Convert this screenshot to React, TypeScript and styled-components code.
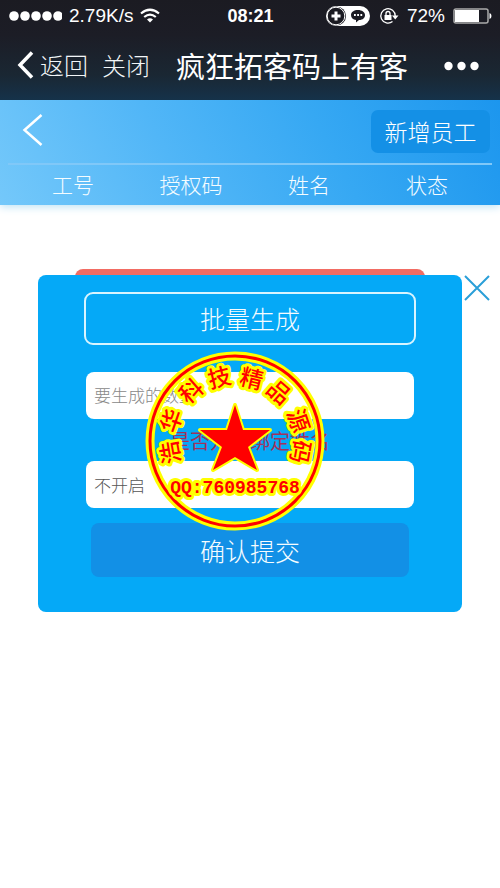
import React from "react";
import styled, { createGlobalStyle } from "styled-components";

const GlobalStyle = createGlobalStyle`
  *, *::before, *::after { box-sizing: border-box; }
  body { margin: 0; background: #fff; }
  body, button, input, select {
    font-family: "Noto Sans CJK SC", "Liberation Sans", sans-serif;
    font-weight: 300;
  }
  button { border: 0; padding: 0; background: none; color: inherit; cursor: pointer; }
`;

const Page = styled.div`
  min-height: 100vh;
  background: #fff;
`;

const TopBar = styled.div`
  position: relative;
  z-index: 1;
  height: 100px;
  color: #fff;
  background: linear-gradient(#1b1b22 0%, #1c1d26 35%, #1a2733 75%, #15324a 100%);
`;

const StatusBar = styled.div`
  display: grid;
  grid-template-columns: 1fr auto 1fr;
  align-items: center;
  height: 32px;
  padding: 0 8px 0 9px;
  font: 400 19px/32px "Liberation Sans", sans-serif;
`;

const StatusGroup = styled.div<{ $end?: boolean }>`
  display: flex;
  align-items: center;
  justify-content: ${(p) => (p.$end ? "flex-end" : "flex-start")};
  gap: ${(p) => (p.$end ? "8px" : "7px")};
`;

const Clock = styled.time`
  font-weight: 700;
  font-size: 18px;
`;

const NavBar = styled.nav`
  display: flex;
  align-items: center;
  height: 68px;
  padding: 0 21px 2px 17px;
`;

const NavButton = styled.button`
  display: flex;
  align-items: center;
  gap: 6px;
  margin-right: 14px;
  font-size: 24px;
  line-height: 36px;
  color: #f2f6f8;
`;

const NavTitle = styled.h1`
  flex: 1;
  margin: 0 0 0 12px;
  font-size: 29px;
  line-height: 40px;
  font-weight: 400;
  white-space: nowrap;
`;

const Header = styled.header`
  padding: 10px 8px 0;
  color: #fff;
  background: linear-gradient(62deg, #74c8fa 0%, #51b6f7 35%, #36a8f3 65%, #1c96ee 100%);
  box-shadow: 0 2px 8px #bfe3f5;
`;

const HeaderActions = styled.div`
  display: flex;
  align-items: center;
  justify-content: space-between;
  height: 53px;
  padding: 0 2px 10px 14px;
`;

const AddButton = styled.button`
  width: 119px;
  height: 43px;
  padding-bottom: 2px;
  border-radius: 7px;
  background: #1490e6;
  font-size: 23px;
  line-height: 40px;
`;

const ColumnBar = styled.div`
  padding: 0 6px;
  border-top: 2px solid #80c8f8;
`;

const Columns = styled.table`
  width: 100%;
  border-collapse: collapse;
  table-layout: fixed;

  th {
    height: 40px;
    padding: 0 0 2px;
    font-size: 21px;
    line-height: 38px;
    font-weight: 300;
    color: #f5fcff;
  }
`;

const Main = styled.main`
  position: relative;
  padding: 64px 15% 0;
`;

const BatchButton = styled.button`
  display: block;
  width: 100%;
  height: 53px;
  border-radius: 8px;
  background: #f26c63;
  color: #fff;
  font-size: 24px;
`;

const Dialog = styled.section`
  position: absolute;
  top: 70px;
  left: 38px;
  right: 38px;
  padding: 17px 46px 35px;
  border-radius: 8px;
  background: #05a9f7;
`;

const DialogTitle = styled.h2`
  height: 53px;
  margin: 0 0 27px;
  border: 2px solid #d8f4ff;
  border-radius: 9px;
  color: #f5fcff;
  font-size: 25px;
  line-height: 48px;
  font-weight: 300;
  text-align: center;
`;

const Form = styled.form`
  display: flex;
  flex-direction: column;
  padding: 0 2px;
`;

const CountInput = styled.input`
  width: 100%;
  height: 47px;
  padding: 0 8px 2px;
  border: 0;
  border-radius: 8px;
  background: #fff;
  font-size: 17px;
  color: #666;

  &::placeholder { color: #888; opacity: 1; }
`;

const BindSelect = styled.select`
  appearance: none;
  width: 100%;
  height: 47px;
  padding: 0 8px;
  border: 0;
  border-radius: 8px;
  background: #fff;
  font-size: 17px;
  color: #555;
`;

const BindLabel = styled.label`
  height: 42px;
  color: #a0325c;
  font-size: 20px;
  line-height: 44px;
  font-weight: 400;
  text-align: center;
`;

const SubmitButton = styled.button`
  height: 54px;
  margin: 15px 5px 0;
  border-radius: 8px;
  background: #1290e6;
  color: #f5fcff;
  font-size: 25px;
  line-height: 52px;
`;

const CloseButton = styled.button`
  position: absolute;
  top: 0;
  right: -28px;
  width: 26px;
  height: 26px;

  svg { display: block; }
`;

const Stamp = styled.svg`
  position: absolute;
  top: 76px;
  left: calc(50% - 105px);
  pointer-events: none;
`;

const StampText = styled.text`
  font-family: "Noto Sans CJK SC", sans-serif;
  font-weight: 500;
  font-size: 23px;
  text-anchor: middle;
  dominant-baseline: central;
  fill: #f00;
  stroke: #ff0;
  stroke-width: 6px;
  stroke-linejoin: round;
  paint-order: stroke;
`;

const StampNumber = styled(StampText)`
  font-family: "Liberation Mono", monospace;
  font-weight: 700;
  font-size: 18px;
`;

const sealCharacters = [
  { char: "浩", x: -66, y: 12, turn: -100 },
  { char: "华", x: -65, y: -21, turn: -71 },
  { char: "科", x: -45, y: -51, turn: -41 },
  { char: "技", x: -16, y: -65, turn: -14 },
  { char: "精", x: 17, y: -64, turn: 14 },
  { char: "品", x: 45, y: -50, turn: 41 },
  { char: "源", x: 65, y: -21, turn: 71 },
  { char: "码", x: 67, y: 11, turn: 100 },
];

const columns = ["工号", "授权码", "姓名", "状态"];

function SignalDots() {
  return (
    <svg width="53" height="12" viewBox="0 0 53 12" fill="#fff" aria-hidden="true">
      {[5, 16, 27, 38, 49].map((x) => (
        <circle key={x} cx={x} cy="6" r="4.8" />
      ))}
    </svg>
  );
}

function WifiIcon() {
  return (
    <svg width="20" height="16" viewBox="0 0 20 16" fill="none" stroke="#fff" strokeWidth="2.2" aria-hidden="true">
      <path d="M1 5.5Q10-2 19 5.5M4.2 9Q10 4.3 15.8 9" />
      <path d="M7 11.5Q10 9 13 11.5L10 14.5Z" fill="#fff" stroke="none" />
    </svg>
  );
}

function AssistIcon() {
  return (
    <svg width="46" height="22" viewBox="0 0 46 22" aria-hidden="true">
      <rect x="1" y="1" width="44" height="20" rx="10" fill="#fff" />
      <circle cx="11.5" cy="11" r="9.500" fill="#1b1b22" />
      <circle cx="11" cy="11" r="8.800" fill="none" stroke="#fff" strokeWidth="1" />
      <path d="M11 6.500v9M6.500 11h9" stroke="#fff" strokeWidth="3" />
      <path d="M33 5c-4 0-7 2-7 5s2 4.500 5 5v2.500l3-2.500c4 0 6-2.200 6-5s-3-5-7-5Z" fill="#1b1b22" />
      <path d="M29 10h1.800M32.200 10H34M35.400 10h1.800" stroke="#fff" strokeWidth="1.800" />
    </svg>
  );
}

function RotationLockIcon() {
  return (
    <svg width="20" height="18" viewBox="0 0 20 18" fill="none" stroke="#fff" strokeWidth="1.3" aria-hidden="true">
      <path d="M13.500 14.500A7.200 7.200 0 1 1 16.200 9" />
      <path d="M13 8.500h6.500L16.200 12.500Z" fill="#fff" stroke="none" />
      <rect x="5.500" y="8" width="7" height="5" fill="#fff" stroke="none" />
      <path d="M7 8V6.500a2 2 0 0 1 4 0V8" />
    </svg>
  );
}

function BatteryIcon() {
  return (
    <svg width="39" height="16" viewBox="0 0 39 16" aria-hidden="true">
      <rect x="1" y="1" width="34" height="14" rx="2" fill="none" stroke="#aaa" strokeWidth="1.5" />
      <rect x="2" y="2" width="24" height="12" fill="#fff" />
      <path d="M36.500 5q2 .5 2 3t-2 3Z" fill="#fff" />
    </svg>
  );
}

function SealStamp() {
  return (
    <Stamp width="180" height="180" viewBox="-90 -90 180 180" role="img" aria-label="浩华科技精品源码">
      <circle r="85" fill="none" stroke="#ff0" strokeWidth="9" />
      <circle r="85" fill="none" stroke="#f00" strokeWidth="3" />
      {sealCharacters.map(({ char, x, y, turn }) => (
        <StampText key={char} transform={`translate(${x} ${y}) rotate(${turn})`}>
          {char}
        </StampText>
      ))}
      <path
        d="M0-36L8-11H35L13 6L22 29L0 16L-22 29L-13 6L-35-11H-8Z"
        fill="#f00"
        stroke="#ff0"
        strokeWidth="4"
        strokeLinejoin="round"
        paintOrder="stroke"
      />
      <StampNumber x="0" y="47">QQ:760985768</StampNumber>
    </Stamp>
  );
}

export default function App() {
  return (
    <Page>
      <GlobalStyle />
      <TopBar>
        <StatusBar>
          <StatusGroup>
            <SignalDots />
            <span>2.79K/s</span>
            <WifiIcon />
          </StatusGroup>
          <Clock>08:21</Clock>
          <StatusGroup $end>
            <AssistIcon />
            <RotationLockIcon />
            <span>72%</span>
            <BatteryIcon />
          </StatusGroup>
        </StatusBar>
        <NavBar>
          <NavButton type="button">
            <svg width="17" height="28" viewBox="0 0 17 28" fill="none" stroke="#fff" strokeWidth="3.500" aria-hidden="true">
              <path d="M15 1.500L3 14L15 26.500" />
            </svg>
            返回
          </NavButton>
          <NavButton type="button">关闭</NavButton>
          <NavTitle>疯狂拓客码上有客</NavTitle>
          <button type="button" aria-label="更多">
            <svg width="35" height="10" viewBox="0 0 35 10" fill="#fff" aria-hidden="true">
              <circle cx="4.500" cy="5" r="4.200" />
              <circle cx="17.500" cy="5" r="4.200" />
              <circle cx="30.500" cy="5" r="4.200" />
            </svg>
          </button>
        </NavBar>
      </TopBar>

      <Header>
        <HeaderActions>
          <button type="button" aria-label="后退">
            <svg width="22" height="34" viewBox="0 0 22 34" fill="none" stroke="#fff" strokeWidth="2.500" aria-hidden="true">
              <path d="M19.500 2L2.500 17L19.500 32" />
            </svg>
          </button>
          <AddButton type="button">新增员工</AddButton>
        </HeaderActions>
        <ColumnBar>
          <Columns>
            <thead>
              <tr>
                {columns.map((name) => (
                  <th key={name} scope="col">{name}</th>
                ))}
              </tr>
            </thead>
          </Columns>
        </ColumnBar>
      </Header>

      <Main>
        <BatchButton type="button" aria-label="批量生成" />
        <Dialog role="dialog" aria-labelledby="dialog-title">
          <DialogTitle id="dialog-title">批量生成</DialogTitle>
          <Form onSubmit={(event) => event.preventDefault()}>
            <CountInput type="text" placeholder="要生成的数量" aria-label="要生成的数量" />
            <BindLabel htmlFor="bind-name">是否开启绑定姓名</BindLabel>
            <BindSelect id="bind-name" defaultValue="off">
              <option value="off">不开启</option>
              <option value="on">开启</option>
            </BindSelect>
            <SubmitButton type="submit">确认提交</SubmitButton>
          </Form>
          <CloseButton type="button" aria-label="关闭">
            <svg width="26" height="26" viewBox="0 0 26 26" stroke="#2a9fd8" strokeWidth="2" aria-hidden="true">
              <path d="M1 1L25 25M25 1L1 25" />
            </svg>
          </CloseButton>
          <SealStamp />
        </Dialog>
      </Main>
    </Page>
  );
}
